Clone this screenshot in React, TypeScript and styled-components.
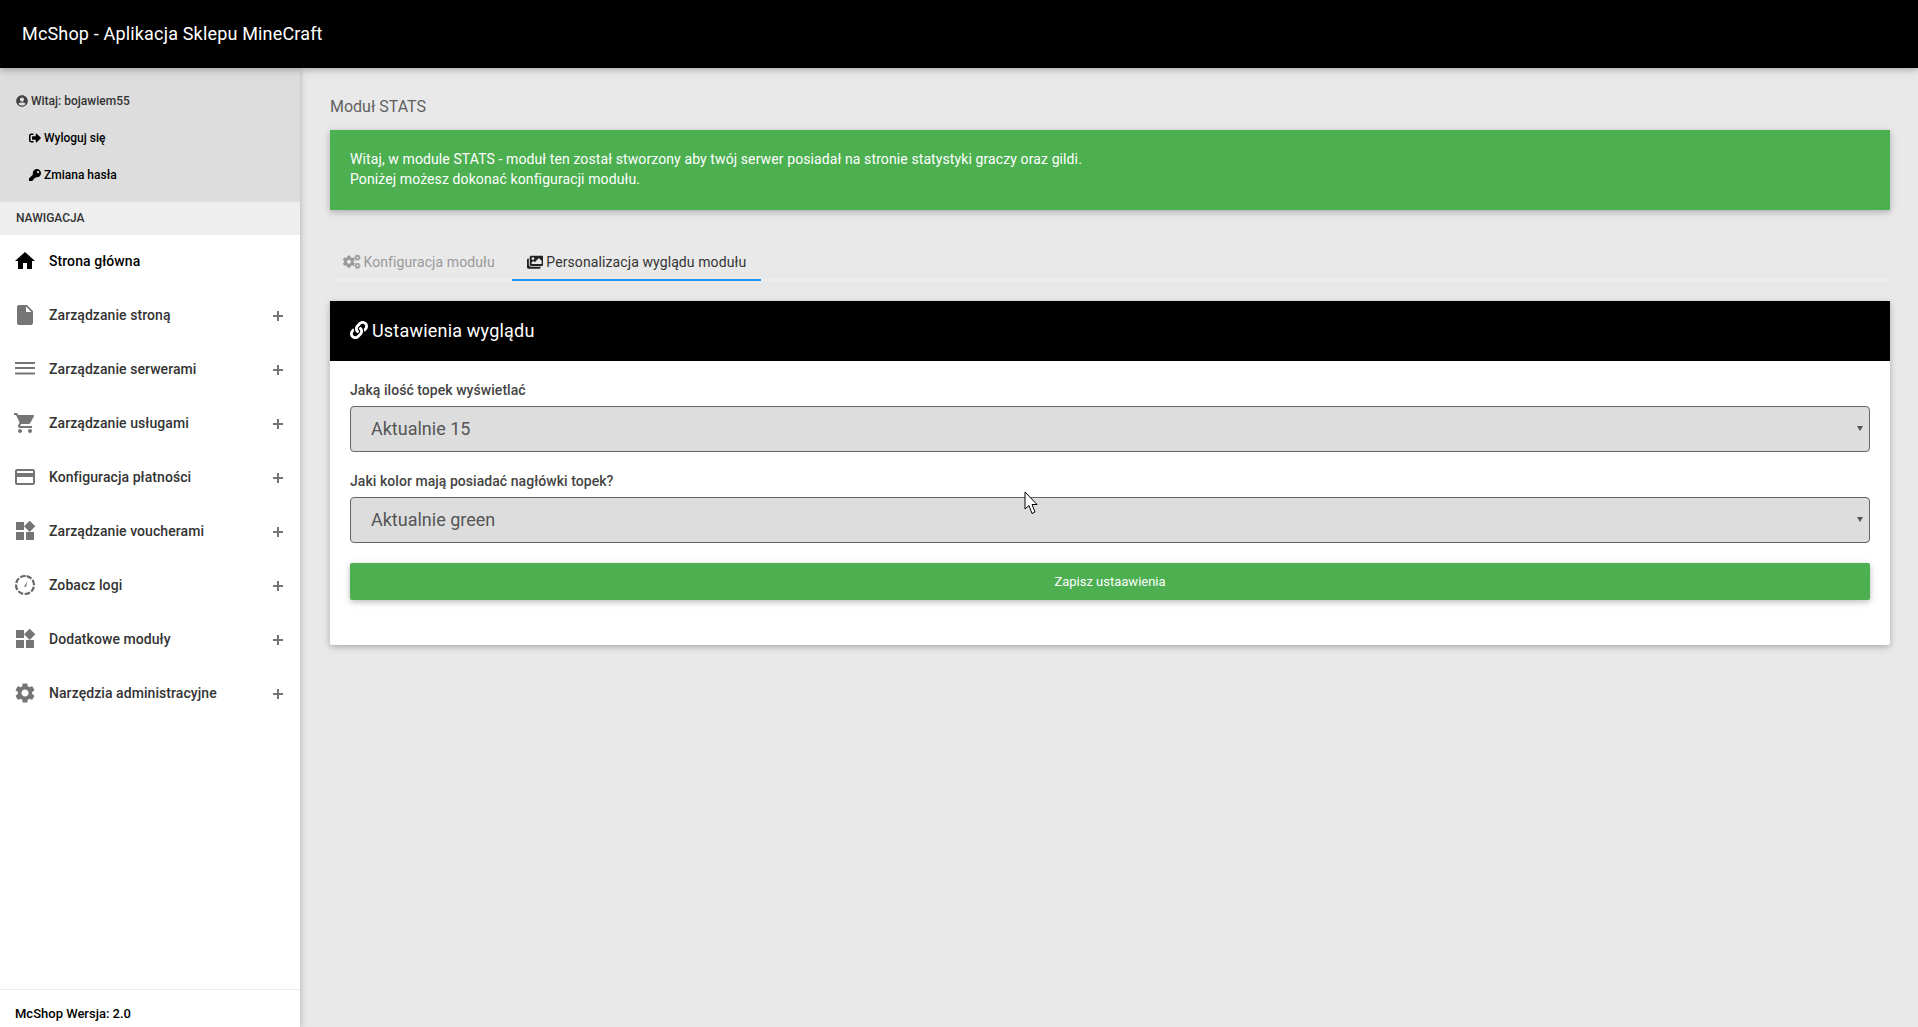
import React from "react";
import styled, { createGlobalStyle } from "styled-components";
import { MdHome, MdInsertDriveFile, MdShoppingCart, MdCreditCard, MdWidgets, MdSettings } from "react-icons/md";
import { FaUserCircle, FaSignOutAlt, FaKey, FaCogs, FaImages, FaLink } from "react-icons/fa";

const Global = createGlobalStyle`
  html, body { margin: 0; padding: 0; height: 100%; overflow: hidden; }
  body { font-family: Roboto, "Liberation Sans", sans-serif; font-size: 15px; color: #333; background: #e9e9e9; }
  * { box-sizing: border-box; }
`;

const Page = styled.div`
  position: relative;
  width: 1918px;
  height: 1027px;
  display: grid;
  grid-template-columns: 300px 1fr;
  grid-template-rows: 68px 1fr;
  overflow: hidden;
`;

const TopBar = styled.header`
  grid-column: 1 / 3;
  z-index: 3;
  background: #000;
  color: #fff;
  display: flex;
  align-items: center;
  padding: 0 22px 2px;
  font-size: 18px;
  letter-spacing: 0.17px;
  box-shadow: 0 2px 5px rgba(0, 0, 0, 0.16), 0 2px 10px rgba(0, 0, 0, 0.12);
`;

const Sidebar = styled.aside`
  z-index: 2;
  background: #fff;
  display: flex;
  flex-direction: column;
  box-shadow: 0 2px 5px rgba(0, 0, 0, 0.16), 0 2px 10px rgba(0, 0, 0, 0.12);
`;

const UserBlock = styled.div`
  height: 134px;
  background: #ddd;
  padding-top: 14px;
  display: flex;
  flex-direction: column;
`;

const UserLine = styled.div<{ $sub?: boolean }>`
  height: 37px;
  display: flex;
  align-items: center;
  gap: 3px;
  padding-left: ${(p) => (p.$sub ? "29px" : "16px")};
  font-size: 12px;
  font-weight: 500;
  color: ${(p) => (p.$sub ? "#000" : "#333")};
  svg { font-size: 12px; flex: none; color: ${(p) => (p.$sub ? "#000" : "#444")}; }
`;

const NavTitle = styled.div`
  height: 33px;
  background: #eee;
  display: flex;
  align-items: center;
  padding: 0 0 1px 16px;
  font-size: 12px;
  font-weight: 500;
  color: #333;
`;

const Nav = styled.nav`
  flex: 1;
  display: flex;
  flex-direction: column;
`;

const NavItem = styled.div<{ $active?: boolean }>`
  height: 54px;
  display: flex;
  align-items: center;
  padding: 0 16px 0 14px;
  font-size: 14px;
  font-weight: 500;
  letter-spacing: 0.07px;
  color: ${(p) => (p.$active ? "#000" : "#333")};
`;

const NavIcon = styled.span<{ $active?: boolean }>`
  width: 35px;
  height: 24px;
  margin-bottom: 2px;
  flex: none;
  display: flex;
  align-items: center;
  color: ${(p) => (p.$active ? "#000" : "#757575")};
  svg { font-size: 24px; margin-left: -1px; }
`;

const NavLabel = styled.span`
  flex: 1;
  padding-bottom: 2px;
`;

const Plus = styled.span`
  width: 10px;
  height: 10px;
  margin-right: 1px;
  flex: none;
  background:
    linear-gradient(#757575, #757575) center / 10px 2px no-repeat,
    linear-gradient(#757575, #757575) center / 2px 10px no-repeat;
`;

const SideFooter = styled.div`
  height: 38px;
  border-top: 1px solid #eee;
  display: flex;
  align-items: center;
  padding: 10px 0 0 15px;
  font-size: 13px;
  font-weight: 500;
  color: #000;
`;

const Main = styled.main`
  padding: 28px 28px 0 30px;
  display: flex;
  flex-direction: column;
`;

const PageTitle = styled.h1`
  margin: 0;
  height: 22px;
  line-height: 22px;
  font-size: 16px;
  font-weight: 400;
  color: #616161;
`;

const Alert = styled.div`
  margin-top: 12px;
  height: 80px;
  padding: 19px 20px;
  background: #4caf50;
  color: #fff;
  font-size: 14px;
  line-height: 20px;
  letter-spacing: 0.105px;
  box-shadow: 0 2px 5px rgba(0, 0, 0, 0.16), 0 2px 10px rgba(0, 0, 0, 0.12);
`;

const Tabs = styled.div`
  margin-top: 33px;
  height: 38px;
  display: flex;
  border-bottom: 2px solid #eee;
`;

const Tab = styled.div<{ $active?: boolean }>`
  height: 38px;
  padding: ${(p) => (p.$active ? "2px 15px 0" : "2px 17px 0 13px")};
  display: flex;
  align-items: center;
  gap: 3px;
  font-size: 14px;
  letter-spacing: 0.1px;
  color: ${(p) => (p.$active ? "#333" : "#999")};
  border-bottom: 2px solid ${(p) => (p.$active ? "#2196f3" : "transparent")};
  svg { font-size: ${(p) => (p.$active ? "16.5px" : "17.5px")}; color: ${(p) => (p.$active ? "#222" : "#999")}; }
`;

const Card = styled.section`
  margin-top: 20px;
  border-radius: 2px;
  background: #fff;
  box-shadow: 0 2px 5px rgba(0, 0, 0, 0.16), 0 2px 10px rgba(0, 0, 0, 0.12);
`;

const CardHead = styled.div`
  height: 60px;
  background: #000;
  color: #fff;
  display: flex;
  align-items: center;
  gap: 4px;
  padding: 0 20px 2px;
  font-size: 18px;
  font-weight: 400;
  letter-spacing: 0.2px;
  svg { font-size: 18px; }
`;

const CardBody = styled.form`
  height: 284px;
  padding: 19px 20px 0;
  display: flex;
  flex-direction: column;
`;

const Label = styled.label`
  height: 20px;
  line-height: 20px;
  font-size: 14px;
  font-weight: 500;
  letter-spacing: 0.05px;
  color: #444;
  margin-bottom: 6px;
`;

const SelectWrap = styled.div`
  position: relative;
  margin-bottom: 19px;
  &::after {
    content: "";
    position: absolute;
    right: 7px;
    top: 20px;
    border-left: 3px solid transparent;
    border-right: 3px solid transparent;
    border-top: 5px solid #555;
    pointer-events: none;
  }
`;

const Select = styled.select`
  display: block;
  height: 46px;
  width: 100%;
  padding: 0 0 2px 20px;
  border: 1px solid #666;
  border-radius: 4px;
  background-color: #ddd;
  color: #555;
  font-family: Roboto, sans-serif;
  font-size: 18px;
  outline: none;
  appearance: none;
`;

const Save = styled.button`
  height: 37px;
  margin-top: 1px;
  padding-bottom: 2px;
  border: 0;
  border-radius: 2px;
  background: #4caf50;
  color: #fff;
  font-family: Roboto, sans-serif;
  font-size: 13px;
  box-shadow: 0 2px 5px rgba(0, 0, 0, 0.16), 0 2px 10px rgba(0, 0, 0, 0.12);
`;

const Cursor = styled.svg`
  position: absolute;
  left: 1024px;
  top: 491px;
  z-index: 5;
`;

const ServersIcon = () => (
  <svg width="24" height="24" viewBox="0 0 24 24" fill="currentColor">
    <rect x="2" y="5" width="20" height="2" />
    <rect x="2" y="10" width="20" height="2" />
    <rect x="2" y="15.5" width="20" height="2" />
  </svg>
);

const LogsIcon = () => (
  <svg width="24" height="24" viewBox="0 0 24 24" fill="currentColor">
    <circle cx="12" cy="12" r="9" fill="none" stroke="#666" strokeWidth="2.2" strokeDasharray="5.5 1.6" transform="rotate(-80 12 12)" />
    <path d="M11 13.5 L14.5 8.5 L13 14 Z" />
  </svg>
);

const items = [
  { label: "Zarządzanie stroną", icon: <MdInsertDriveFile /> },
  { label: "Zarządzanie serwerami", icon: <ServersIcon /> },
  { label: "Zarządzanie usługami", icon: <MdShoppingCart /> },
  { label: "Konfiguracja płatności", icon: <MdCreditCard /> },
  { label: "Zarządzanie voucherami", icon: <MdWidgets /> },
  { label: "Zobacz logi", icon: <LogsIcon /> },
  { label: "Dodatkowe moduły", icon: <MdWidgets /> },
  { label: "Narzędzia administracyjne", icon: <MdSettings /> },
];

export default function App() {
  return (
    <Page>
      <Global />
      <TopBar>McShop - Aplikacja Sklepu MineCraft</TopBar>
      <Sidebar>
        <UserBlock>
          <UserLine><FaUserCircle /> Witaj: bojawiem55</UserLine>
          <UserLine $sub><FaSignOutAlt /> Wyloguj się</UserLine>
          <UserLine $sub><FaKey /> Zmiana hasła</UserLine>
        </UserBlock>
        <NavTitle>NAWIGACJA</NavTitle>
        <Nav>
          <NavItem $active>
            <NavIcon $active><MdHome /></NavIcon>
            <NavLabel>Strona główna</NavLabel>
          </NavItem>
          {items.map((it) => (
            <NavItem key={it.label}>
              <NavIcon>{it.icon}</NavIcon>
              <NavLabel>{it.label}</NavLabel>
              <Plus />
            </NavItem>
          ))}
        </Nav>
        <SideFooter>McShop Wersja: 2.0</SideFooter>
      </Sidebar>
      <Main>
        <PageTitle>Moduł STATS</PageTitle>
        <Alert>
          Witaj, w module STATS - moduł ten został stworzony aby twój serwer posiadał na stronie statystyki graczy oraz gildi.
          <br />
          Poniżej możesz dokonać konfiguracji modułu.
        </Alert>
        <Tabs>
          <Tab><FaCogs /> Konfiguracja modułu</Tab>
          <Tab $active><FaImages /> Personalizacja wyglądu modułu</Tab>
        </Tabs>
        <Card>
          <CardHead><FaLink /> Ustawienia wyglądu</CardHead>
          <CardBody>
            <Label>Jaką ilość topek wyświetlać</Label>
            <SelectWrap>
              <Select defaultValue="15"><option value="15">Aktualnie 15</option></Select>
            </SelectWrap>
            <Label>Jaki kolor mają posiadać nagłówki topek?</Label>
            <SelectWrap>
              <Select defaultValue="green"><option value="green">Aktualnie green</option></Select>
            </SelectWrap>
            <Save type="button">Zapisz ustaawienia</Save>
          </CardBody>
        </Card>
      </Main>
      <Cursor width="14" height="26" viewBox="0 0 14 26">
        <path d="M1 1 L1 18 L5 14.5 L8 22.5 L11 21 L8 13.5 L13 13.5 Z" fill="#fff" stroke="#000" strokeWidth="1" />
      </Cursor>
    </Page>
  );
}
